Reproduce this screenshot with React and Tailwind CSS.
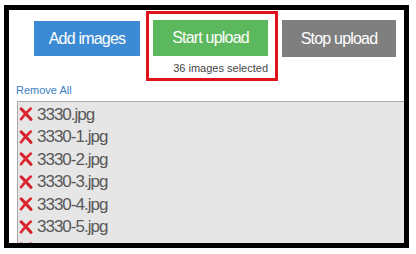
import React from "react";

const files = ["3330.jpg", "3330-1.jpg", "3330-2.jpg", "3330-3.jpg", "3330-4.jpg", "3330-5.jpg", "3330-6.jpg", "3330-7.jpg"];

function Cross() {
  return (
    <svg width="14" height="14" viewBox="0 0 14 14" className="shrink-0">
      <path d="M2.2 1.8 C5 4.5 8.5 8.5 12 12.4" stroke="#d3202a" strokeWidth="3" strokeLinecap="round" fill="none" />
      <path d="M11.8 1.6 C8.5 4.5 5 8.2 2 12.2" stroke="#e0262e" strokeWidth="2.6" strokeLinecap="round" fill="none" />
    </svg>
  );
}

export default function App() {
  return (
    <div
      className="w-[416px] h-[254px] bg-white pt-[5px] pl-[4px]"
      style={{ fontFamily: '"Liberation Sans", Arial, sans-serif' }}
    >
      <div className="w-[405px] h-[243px] border-[5px] border-black overflow-hidden bg-white flex flex-col">
        <div className="flex items-start pl-[25px] shrink-0">
          <div className="mt-[11px] w-[106px] h-[35px] bg-[#3b8ad3] text-white text-[16px] tracking-[-0.8px] flex items-center justify-center">
            Add images
          </div>
          <div className="ml-[6px] mt-[1px] border-[3px] border-[#e0121b] w-[132px] h-[70px] pt-[6px] pl-[4px] flex flex-col items-start">
            <div className="w-[115px] h-[36px] bg-[#5cb85c] text-white text-[16px] tracking-[-0.8px] flex items-center justify-center">
              Start upload
            </div>
            <div className="w-[115px] text-right text-[11px] leading-[13px] mt-[6px] text-[#444]">
              36 images selected
            </div>
          </div>
          <div className="ml-[4px] mt-[10px] w-[114px] h-[37px] bg-[#7f7f7f] text-white text-[16px] tracking-[-0.8px] flex items-center justify-center">
            Stop upload
          </div>
        </div>
        <div className="pl-[7px] mt-[3px] text-[11px] leading-[13px] text-[#3c80c2] shrink-0">Remove All</div>
        <div className="ml-[8px] mt-[4px] w-[390px] h-[200px] shrink-0 border border-[#a9a9a9] bg-[#e6e6e6] pt-[1px]">
          {files.map((f) => (
            <div key={f} className="h-[22.5px] flex items-center pl-[1px]">
              <Cross />
              <span className="ml-[4px] text-[17px] tracking-[-1px] text-[#585858]">{f}</span>
            </div>
          ))}
        </div>
      </div>
    </div>
  );
}
